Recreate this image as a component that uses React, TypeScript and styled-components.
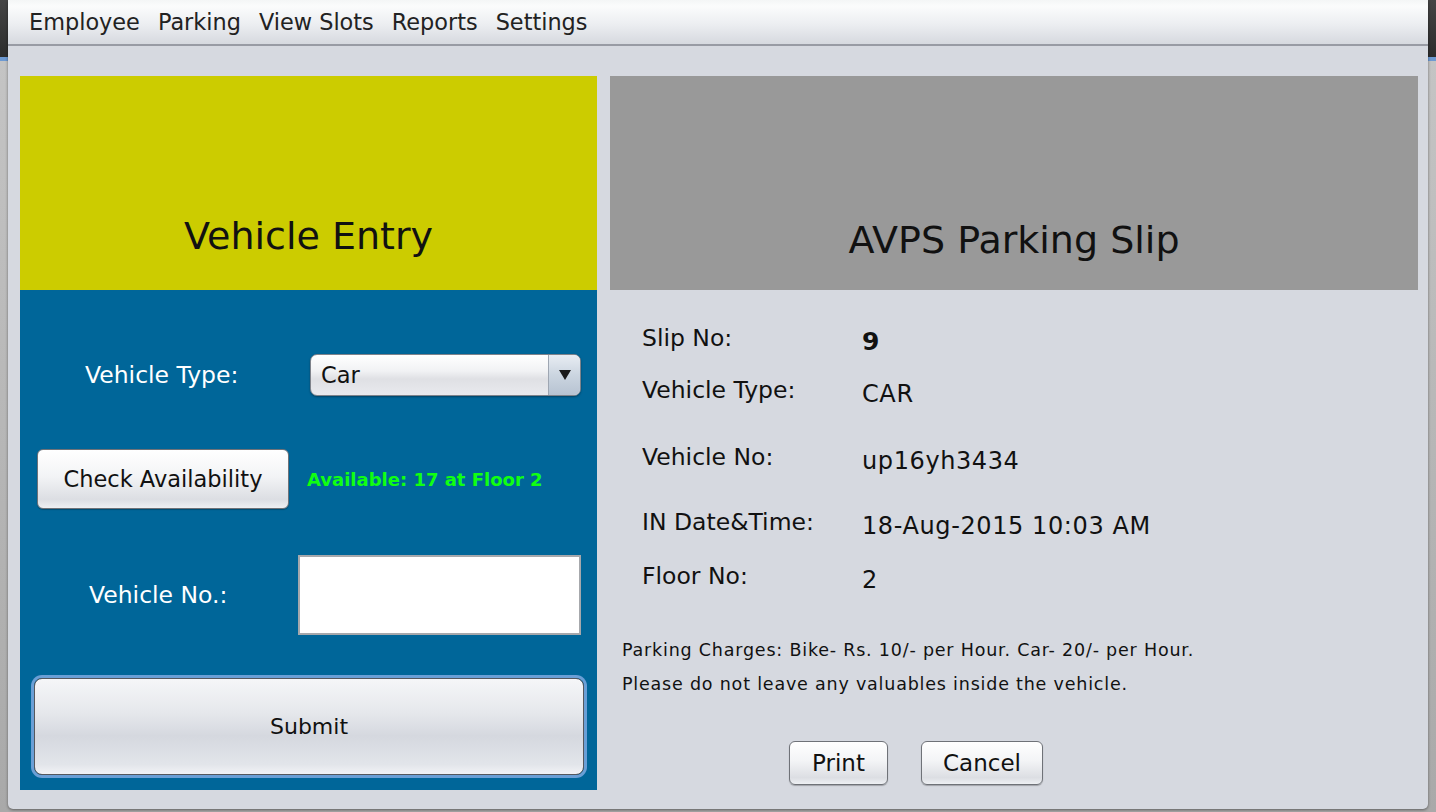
import React from "react";
import styled, { createGlobalStyle } from "styled-components";

const FONT = `"DejaVu Sans", "Noto Sans", sans-serif`;

const Global = createGlobalStyle`
  html, body { margin: 0; padding: 0; }
  body {
    width: 1436px;
    height: 812px;
    overflow: hidden;
    font-family: ${FONT};
    background: linear-gradient(
      to bottom,
      #454545 0px,
      #2c2c2c 57px,
      #6e9ad2 57px,
      #6e9ad2 61px,
      #c4c4c4 61px,
      #a9a9a9 812px
    );
  }
`;

const Window = styled.div`
  margin-left: 8px;
  width: 1420px;
  height: 809px;
  background: #d6d9e0;
  display: flex;
  flex-direction: column;
  border-radius: 0 0 5px 5px;
  box-shadow: 0 1px 3px rgba(0, 0, 0, 0.45);
`;

const MenuBar = styled.div`
  height: 46px;
  box-sizing: border-box;
  display: flex;
  align-items: center;
  padding-left: 12px;
  background: linear-gradient(to bottom, #f4f6f6 0%, #fbfcfc 14%, #eceef1 55%, #d6d9df 100%);
  border-bottom: 2px solid #989ba4;
`;

const MenuItem = styled.span`
  font-size: 22.4px;
  color: #222;
  padding: 0 9px;
  line-height: 42px;
`;

const Content = styled.div`
  display: flex;
  gap: 13px;
  padding: 30px 10px 0 12px;
`;

const LeftPanel = styled.div`
  width: 577px;
  display: flex;
  flex-direction: column;
`;

const RightPanel = styled.div`
  width: 808px;
  display: flex;
  flex-direction: column;
`;

const Header = styled.div<{ $bg: string; $pad: number }>`
  height: 214px;
  background: ${(p) => p.$bg};
  display: flex;
  align-items: flex-end;
  justify-content: center;
  padding-bottom: ${(p) => p.$pad}px;
  box-sizing: border-box;
`;

const Title = styled.h1`
  margin: 0;
  font-weight: normal;
  font-size: 38px;
  color: #111;
  line-height: 44px;
`;

const EntryBody = styled.div`
  height: 500px;
  background: #006699;
  display: flex;
  flex-direction: column;
`;

const FormRow = styled.div<{ $top: number; $h: number }>`
  margin-top: ${(p) => p.$top}px;
  height: ${(p) => p.$h}px;
  display: flex;
  align-items: center;
`;

const WhiteLabel = styled.span<{ $left: number; $width: number }>`
  margin-left: ${(p) => p.$left}px;
  width: ${(p) => p.$width}px;
  color: #fff;
  font-size: 23.5px;
`;

const Combo = styled.div`
  width: 271px;
  height: 42px;
  box-sizing: border-box;
  border: 1px solid #7f838b;
  border-radius: 7px;
  display: flex;
  overflow: hidden;
  background: linear-gradient(to bottom, #ffffff 0%, #f1f2f4 40%, #dfe0e4 60%, #e9eaee 100%);
  box-shadow: 0 1px 2px rgba(0, 0, 0, 0.35);
`;

const ComboText = styled.span`
  flex: 1;
  padding-left: 10px;
  font-size: 22.5px;
  line-height: 40px;
  color: #111;
`;

const ComboArrow = styled.div`
  width: 31px;
  border-left: 1px solid #9ea6b2;
  display: flex;
  align-items: center;
  justify-content: center;
  background: linear-gradient(to bottom, #e8edf3 0%, #cbd5e0 50%, #b7c3d2 100%);
`;

const Button = styled.button<{ $w: number; $h: number; $size?: number }>`
  width: ${(p) => p.$w}px;
  height: ${(p) => p.$h}px;
  box-sizing: border-box;
  border: 1px solid #6f7278;
  border-radius: 6px;
  font-family: ${FONT};
  font-size: ${(p) => p.$size ?? 23}px;
  color: #111;
  padding: 0;
  background: linear-gradient(to bottom, #ffffff 0%, #f3f4f6 45%, #dcdee3 85%, #eef0f3 100%);
  box-shadow: 0 1px 1px rgba(0, 0, 0, 0.25);
`;

const CheckButton = styled(Button)`
  margin-left: 17px;
`;

const Availability = styled.span`
  margin-left: 18px;
  color: #11ff11;
  font-weight: bold;
  font-size: 18px;
`;

const TextInput = styled.input`
  width: 283px;
  height: 80px;
  box-sizing: border-box;
  border: 2px solid #a6a8ac;
  background: #fff;
  outline: none;
`;

const SubmitButton = styled(Button)`
  margin-left: 14px;
  border: 1px solid #55585e;
  border-radius: 8px;
  box-shadow: 0 0 0 3px #6a9fd6;
  background: linear-gradient(to bottom, #f5f6f8 0%, #e6e8ec 35%, #d5d8df 60%, #e2e5ea 90%, #f2f3f6 100%);
`;

const SlipBody = styled.div`
  display: flex;
  flex-direction: column;
  padding-left: 12px;
`;

const InfoRow = styled.div<{ $top: number }>`
  margin-top: ${(p) => p.$top}px;
  display: flex;
  align-items: baseline;
  height: 30px;
`;

const InfoLabel = styled.span`
  width: 220px;
  margin-left: 20px;
  font-size: 23.5px;
  color: #111;
`;

const InfoValue = styled.span<{ $bold?: boolean }>`
  font-size: ${(p) => (p.$bold ? 25 : 24)}px;
  font-weight: ${(p) => (p.$bold ? "bold" : "normal")};
  letter-spacing: ${(p) => (p.$bold ? 0 : 0.6)}px;
  color: #111;
  position: relative;
  top: 4px;
`;

const Note = styled.p<{ $top: number }>`
  margin: ${(p) => p.$top}px 0 0 0;
  font-size: 17.5px;
  letter-spacing: 0.8px;
  line-height: 20px;
  color: #111;
`;

const Actions = styled.div`
  margin-top: 47px;
  display: flex;
  gap: 33px;
  padding-left: 167px;
`;

const Arrow = () => (
  <svg width="14" height="12" viewBox="0 0 14 12">
    <path d="M1 1 L13 1 L7 11 Z" fill="#1a1a1a" />
  </svg>
);

export default function App() {
  return (
    <>
      <Global />
      <Window>
        <MenuBar>
          <MenuItem>Employee</MenuItem>
          <MenuItem>Parking</MenuItem>
          <MenuItem>View Slots</MenuItem>
          <MenuItem>Reports</MenuItem>
          <MenuItem>Settings</MenuItem>
        </MenuBar>
        <Content>
          <LeftPanel>
            <Header $bg="#cccc00" $pad={32}>
              <Title>Vehicle Entry</Title>
            </Header>
            <EntryBody>
              <FormRow $top={64} $h={42}>
                <WhiteLabel $left={65} $width={225}>Vehicle Type:</WhiteLabel>
                <Combo>
                  <ComboText>Car</ComboText>
                  <ComboArrow>
                    <Arrow />
                  </ComboArrow>
                </Combo>
              </FormRow>
              <FormRow $top={53} $h={60}>
                <CheckButton $w={252} $h={60} $size={22.5}>Check Availability</CheckButton>
                <Availability>Available: 17 at Floor 2</Availability>
              </FormRow>
              <FormRow $top={46} $h={80}>
                <WhiteLabel $left={69} $width={209}>Vehicle No.:</WhiteLabel>
                <TextInput />
              </FormRow>
              <FormRow $top={43} $h={97}>
                <SubmitButton $w={550} $h={97} $size={22}>Submit</SubmitButton>
              </FormRow>
            </EntryBody>
          </LeftPanel>
          <RightPanel>
            <Header $bg="#999999" $pad={28}>
              <Title>AVPS Parking Slip</Title>
            </Header>
            <SlipBody>
              <InfoRow $top={33}>
                <InfoLabel>Slip No:</InfoLabel>
                <InfoValue $bold>9</InfoValue>
              </InfoRow>
              <InfoRow $top={23}>
                <InfoLabel>Vehicle Type:</InfoLabel>
                <InfoValue>CAR</InfoValue>
              </InfoRow>
              <InfoRow $top={37}>
                <InfoLabel>Vehicle No:</InfoLabel>
                <InfoValue>up16yh3434</InfoValue>
              </InfoRow>
              <InfoRow $top={35}>
                <InfoLabel>IN Date&amp;Time:</InfoLabel>
                <InfoValue>18-Aug-2015 10:03 AM</InfoValue>
              </InfoRow>
              <InfoRow $top={24}>
                <InfoLabel>Floor No:</InfoLabel>
                <InfoValue>2</InfoValue>
              </InfoRow>
              <Note $top={48}>
                Parking Charges: Bike- Rs. 10/- per Hour. Car- 20/- per Hour.
              </Note>
              <Note $top={14}>Please do not leave any valuables inside the vehicle.</Note>
              <Actions>
                <Button $w={99} $h={44}>Print</Button>
                <Button $w={122} $h={44}>Cancel</Button>
              </Actions>
            </SlipBody>
          </RightPanel>
        </Content>
      </Window>
    </>
  );
}
